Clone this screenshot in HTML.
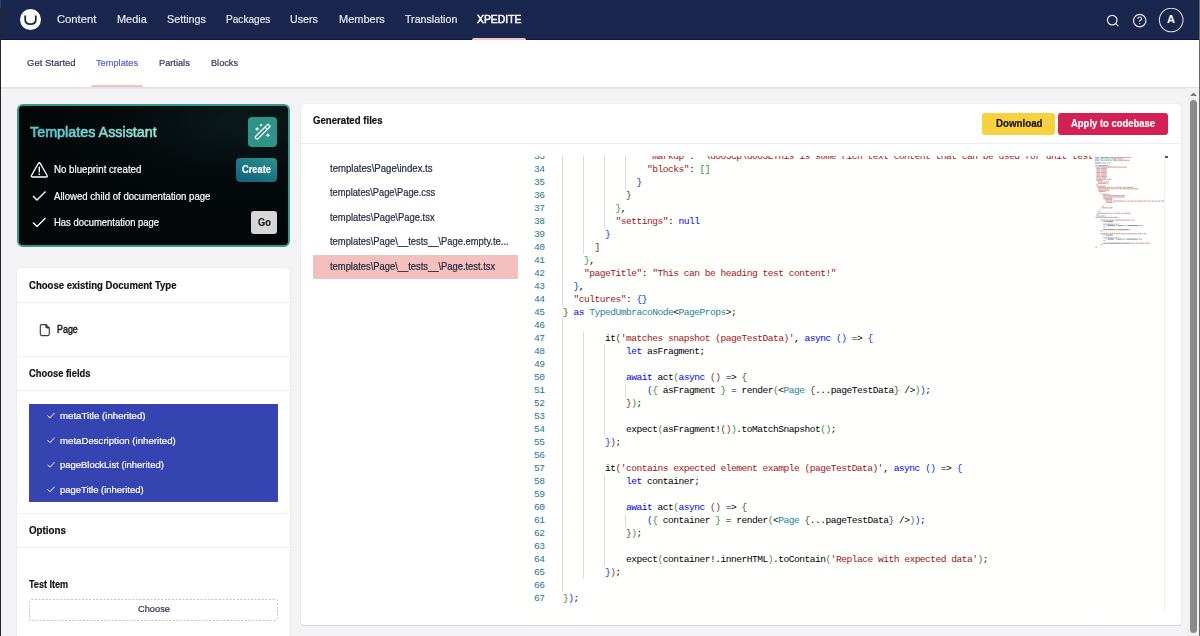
<!DOCTYPE html>
<html><head><meta charset="utf-8">
<style>
*{box-sizing:border-box;margin:0;padding:0}
html,body{width:1200px;height:636px;overflow:hidden;background:#f3f3f5;font-family:"Liberation Sans",sans-serif}
.a{position:absolute}
.t{position:absolute;white-space:pre;transform-origin:0 50%;-webkit-text-stroke:0.2px currentColor}
#hdr{left:0;top:0;width:1200px;height:40px;background:#1b264f}
#sub{left:0;top:40px;width:1200px;height:48px;background:#fff;border-bottom:1px solid #e2e2e6;box-shadow:0 1px 1px rgba(0,0,0,.04)}
#lb{left:0;top:0;width:1px;height:636px;background:#262626}
.ind{height:2px;background:#f5c1bc;border-radius:2px 2px 0 0}
#card{left:17px;top:104px;width:273px;height:143px;border:2px solid #2f9a90;border-radius:6px;background:radial-gradient(ellipse 70% 60% at 82% 12%,#0a1a1c 0%,#050c0e 55%,#030708 100%)}
.btn{position:absolute;border-radius:3px}
.panel{position:absolute;background:#fff;box-shadow:0 0 1px rgba(0,0,0,.22),0 1px 1px rgba(0,0,0,.1)}
.hr{position:absolute;height:1px;background:#ececee}
#ed{left:520px;top:156px;width:572px;height:460px;overflow:hidden;background:#fffffe}
.cl{position:absolute;white-space:pre;font-family:"Liberation Mono",monospace;font-size:9.6px;letter-spacing:-0.51px;line-height:13px;height:13px}
.ln{position:absolute;left:0;width:24.6px;text-align:right;font-family:"Liberation Mono",monospace;font-size:9.6px;letter-spacing:-0.51px;line-height:13px;color:#237893}
.ig{position:absolute;width:1px;background:#d9d9d9}
</style></head><body>
<div id="hdr" class="a"></div>
<div class="a" style="left:0;top:39px;width:1200px;height:1px;background:#0c1640"></div>
<!-- logo -->
<div class="a" style="left:20px;top:9px;width:21px;height:21px;border-radius:50%;background:#fff"></div>
<svg class="a" style="left:20px;top:9px" width="21" height="21" viewBox="0 0 21 21"><path d="M5.2 6.4 V10.8 C5.2 14 7 15.1 10.5 15.1 C14 15.1 15.8 14 15.8 10.8 V6.4" fill="none" stroke="#1b264f" stroke-width="1.8"/></svg>
<div class="a ind" style="left:472px;top:38px;width:54px"></div>
<!-- header icons -->
<svg class="a" style="left:1100px;top:8px" width="90" height="26" viewBox="0 0 90 26">
 <circle cx="12.2" cy="12.1" r="4.8" fill="none" stroke="#e8e8ee" stroke-width="1.2"/>
 <line x1="15.7" y1="15.6" x2="18.3" y2="18.2" stroke="#e8e8ee" stroke-width="1.2"/>
 <circle cx="39.7" cy="12.6" r="6.2" fill="none" stroke="#e8e8ee" stroke-width="1.2"/>
 <path d="M37.8 11 Q37.8 9 39.7 9 Q41.6 9 41.6 10.8 Q41.6 12 39.7 12.8 V13.8" fill="none" stroke="#e8e8ee" stroke-width="1.1"/>
 <circle cx="39.7" cy="15.6" r="0.7" fill="#e8e8ee"/>
 <circle cx="71.2" cy="12" r="11.8" fill="none" stroke="#d8d8e0" stroke-width="1.1"/>
</svg>
<div class="a" style="left:1162px;top:14px;width:18px;text-align:center;font-weight:700;font-size:11px;line-height:11px;color:#fff">A</div>
<!-- sub nav -->
<div id="sub" class="a"></div>
<div class="a ind" style="left:91px;top:85px;width:52px"></div>
<!-- assistant card -->
<div id="card" class="a"></div>
<div class="btn" style="left:248px;top:117px;width:29px;height:30px;background:#2e9488;border-radius:4px"></div>
<svg class="a" style="left:248px;top:117px" width="29" height="30" viewBox="0 0 29 30">
 <g transform="translate(14.6 14.8) rotate(-45)"><rect x="-9.4" y="-1.65" width="18.8" height="3.3" rx="1.4" fill="none" stroke="#fff" stroke-width="1.25"/><line x1="5" y1="-1.6" x2="5" y2="1.6" stroke="#fff" stroke-width="1"/></g>
 <path d="M9.2 9.6 l0.7 1.7 1.7 0.7 -1.7 0.7 -0.7 1.7 -0.7 -1.7 -1.7 -0.7 1.7 -0.7z" fill="#fff"/>
 <path d="M19.9 15.8 l0.7 1.7 1.7 0.7 -1.7 0.7 -0.7 1.7 -0.7 -1.7 -1.7 -0.7 1.7 -0.7z" fill="#fff"/>
 <circle cx="13" cy="8.1" r="1.2" fill="#fff"/>
</svg>
<div class="btn" style="left:236px;top:158px;width:41px;height:24px;background:linear-gradient(20deg,#155f7a 0%,#1d7a86 55%,#2a948e 100%);border-radius:4px"></div>
<div class="btn" style="left:251px;top:211px;width:26px;height:23px;background:#d6d6d6;border-radius:3px"></div>
<!-- warning icon -->
<svg class="a" style="left:30px;top:161px" width="19" height="18" viewBox="0 0 19 18">
 <path d="M8.2 2.6 Q9.3 0.9 10.4 2.6 L17 14.3 Q17.9 16 16 16 H2.6 Q0.7 16 1.6 14.3 Z" fill="none" stroke="#fff" stroke-width="1.3" stroke-linejoin="round"/>
 <line x1="9.3" y1="6.3" x2="9.3" y2="10.8" stroke="#fff" stroke-width="1.4" stroke-linecap="round"/>
 <circle cx="9.3" cy="13.1" r="0.85" fill="#fff"/>
</svg>
<svg class="a" style="left:31px;top:189px" width="18" height="40" viewBox="0 0 18 40">
 <path d="M2 7 L6 11 L14.5 2.5" fill="none" stroke="#fff" stroke-width="1.4"/>
 <path d="M2 33.5 L6 37.5 L14.5 29" fill="none" stroke="#fff" stroke-width="1.4"/>
</svg>
<!-- left white card -->
<div class="panel" style="left:17px;top:268px;width:273px;height:380px;border-radius:3px 3px 0 0"></div>
<div class="hr" style="left:17px;top:302px;width:273px"></div>
<div class="hr" style="left:17px;top:356px;width:273px;background:#f0f0f2"></div>
<div class="a" style="left:16px;top:356px;width:2px;height:2px;background:#f3f3f5"></div>
<div class="hr" style="left:17px;top:390px;width:273px"></div>
<div class="hr" style="left:17px;top:513px;width:273px;background:#f0f0f2"></div>
<div class="a" style="left:16px;top:513px;width:2px;height:2px;background:#f3f3f5"></div>
<div class="hr" style="left:17px;top:547px;width:273px"></div>
<svg class="a" style="left:38px;top:322px" width="14" height="16" viewBox="0 0 14 16">
 <path d="M3.8 2.6 H8.1 L11.3 5.8 V12.1 Q11.3 13.6 9.8 13.6 H3.8 Q2.3 13.6 2.3 12.1 V4.1 Q2.3 2.6 3.8 2.6 Z" fill="none" stroke="#3a3a3a" stroke-width="1.15" stroke-linejoin="round"/>
 <path d="M8.1 2.6 V4.6 Q8.1 5.8 9.3 5.8 H11.3" fill="none" stroke="#3a3a3a" stroke-width="1.6"/>
</svg>
<div class="a" style="left:29px;top:404px;width:249px;height:98px;background:#3544b1"></div>
<svg class="a" style="left:45px;top:408px" width="12" height="90" viewBox="0 0 12 90">
 <path d="M2.5 7.5 L5 10 L9.5 5" fill="none" stroke="#fff" stroke-width="1"/>
 <path d="M2.5 32.1 L5 34.6 L9.5 29.6" fill="none" stroke="#fff" stroke-width="1"/>
 <path d="M2.5 56.7 L5 59.2 L9.5 54.2" fill="none" stroke="#fff" stroke-width="1"/>
 <path d="M2.5 81.3 L5 83.8 L9.5 78.8" fill="none" stroke="#fff" stroke-width="1"/>
</svg>
<svg class="a" style="left:29px;top:599px" width="249" height="22" viewBox="0 0 249 22"><rect x="0.5" y="0.5" width="248" height="21" rx="2" fill="none" stroke="#c4c4c8" stroke-width="1" stroke-dasharray="2 1.6"/></svg>
<!-- right panel -->
<div class="panel" style="left:301px;top:104px;width:880px;height:521px;border-radius:3px"></div>
<div class="hr" style="left:301px;top:143px;width:880px"></div>
<div class="a" style="left:313px;top:255px;width:205px;height:24px;background:#f4c0bd"></div>
<div class="btn" style="left:982px;top:113px;width:73px;height:22px;background:#f9d13f"></div>
<div class="btn" style="left:1058px;top:113px;width:110px;height:22px;background:#d42054"></div>
<!-- editor -->
<div id="ed" class="a">
<div class="ig" style="left:41.50px;top:0px;height:150.0px"></div>
<div class="ig" style="left:62.50px;top:0px;height:98.0px"></div>
<div class="ig" style="left:83.50px;top:0px;height:72.0px"></div>
<div class="ig" style="left:104.50px;top:0px;height:33.0px"></div>
<div class="ig" style="left:41.50px;top:163.0px;height:273.0px"></div>
<div class="ig" style="left:62.50px;top:176.0px;height:247.0px"></div>
<div class="ig" style="left:83.50px;top:189.0px;height:91.0px"></div>
<div class="ig" style="left:104.50px;top:228.0px;height:13.0px"></div>
<div class="ig" style="left:83.50px;top:319.0px;height:91.0px"></div>
<div class="ig" style="left:104.50px;top:358.0px;height:13.0px"></div>
<div class="ln" style="top:-6.0px">33</div>
<div class="ln" style="top:7.0px">34</div>
<div class="ln" style="top:20.0px">35</div>
<div class="ln" style="top:33.0px">36</div>
<div class="ln" style="top:46.0px">37</div>
<div class="ln" style="top:59.0px">38</div>
<div class="ln" style="top:72.0px">39</div>
<div class="ln" style="top:85.0px">40</div>
<div class="ln" style="top:98.0px">41</div>
<div class="ln" style="top:111.0px">42</div>
<div class="ln" style="top:124.0px">43</div>
<div class="ln" style="top:137.0px">44</div>
<div class="ln" style="top:150.0px">45</div>
<div class="ln" style="top:163.0px">46</div>
<div class="ln" style="top:176.0px">47</div>
<div class="ln" style="top:189.0px">48</div>
<div class="ln" style="top:202.0px">49</div>
<div class="ln" style="top:215.0px">50</div>
<div class="ln" style="top:228.0px">51</div>
<div class="ln" style="top:241.0px">52</div>
<div class="ln" style="top:254.0px">53</div>
<div class="ln" style="top:267.0px">54</div>
<div class="ln" style="top:280.0px">55</div>
<div class="ln" style="top:293.0px">56</div>
<div class="ln" style="top:306.0px">57</div>
<div class="ln" style="top:319.0px">58</div>
<div class="ln" style="top:332.0px">59</div>
<div class="ln" style="top:345.0px">60</div>
<div class="ln" style="top:358.0px">61</div>
<div class="ln" style="top:371.0px">62</div>
<div class="ln" style="top:384.0px">63</div>
<div class="ln" style="top:397.0px">64</div>
<div class="ln" style="top:410.0px">65</div>
<div class="ln" style="top:423.0px">66</div>
<div class="ln" style="top:436.0px">67</div>
<div class="cl" style="top:-6.0px;left:127.00px"><span style="color:#a31515">&quot;markup&quot;</span><span style="color:#000000">: </span><span style="color:#a31515">&quot;\u003Cp\u003EThis is some rich text content that can be used for unit test</span></div>
<div class="cl" style="top:7.0px;left:127.00px"><span style="color:#a31515">&quot;blocks&quot;</span><span style="color:#000000">: </span><span style="color:#319331">[]</span></div>
<div class="cl" style="top:20.0px;left:116.50px"><span style="color:#0431fa">}</span></div>
<div class="cl" style="top:33.0px;left:106.00px"><span style="color:#7b3814">}</span></div>
<div class="cl" style="top:46.0px;left:95.50px"><span style="color:#319331">}</span><span style="color:#000000">,</span></div>
<div class="cl" style="top:59.0px;left:95.50px"><span style="color:#a31515">&quot;settings&quot;</span><span style="color:#000000">: </span><span style="color:#0000ff">null</span></div>
<div class="cl" style="top:72.0px;left:85.00px"><span style="color:#0431fa">}</span></div>
<div class="cl" style="top:85.0px;left:74.50px"><span style="color:#7b3814">]</span></div>
<div class="cl" style="top:98.0px;left:64.00px"><span style="color:#319331">}</span><span style="color:#000000">,</span></div>
<div class="cl" style="top:111.0px;left:64.00px"><span style="color:#a31515">&quot;pageTitle&quot;</span><span style="color:#000000">: </span><span style="color:#a31515">&quot;This can be heading test content!&quot;</span></div>
<div class="cl" style="top:124.0px;left:53.50px"><span style="color:#0431fa">}</span><span style="color:#000000">,</span></div>
<div class="cl" style="top:137.0px;left:53.50px"><span style="color:#a31515">&quot;cultures&quot;</span><span style="color:#000000">: </span><span style="color:#0431fa">{}</span></div>
<div class="cl" style="top:150.0px;left:43.00px"><span style="color:#7b3814">}</span><span style="color:#000000"> </span><span style="color:#0000ff">as</span><span style="color:#000000"> </span><span style="color:#267f99">TypedUmbracoNode</span><span style="color:#000000">&lt;</span><span style="color:#267f99">PageProps</span><span style="color:#000000">&gt;;</span></div>
<div class="cl" style="top:163.0px;left:43.00px"></div>
<div class="cl" style="top:176.0px;left:85.00px"><span style="color:#000000">it</span><span style="color:#7b3814">(</span><span style="color:#a31515">&#x27;matches snapshot (pageTestData)&#x27;</span><span style="color:#000000">, </span><span style="color:#0000ff">async</span><span style="color:#000000"> </span><span style="color:#0431fa">()</span><span style="color:#000000"> =&gt; </span><span style="color:#0431fa">{</span></div>
<div class="cl" style="top:189.0px;left:106.00px"><span style="color:#0000ff">let</span><span style="color:#000000"> asFragment;</span></div>
<div class="cl" style="top:202.0px;left:43.00px"></div>
<div class="cl" style="top:215.0px;left:106.00px"><span style="color:#0000ff">await</span><span style="color:#000000"> act</span><span style="color:#319331">(</span><span style="color:#0000ff">async</span><span style="color:#000000"> </span><span style="color:#7b3814">()</span><span style="color:#000000"> =&gt; </span><span style="color:#7b3814">{</span></div>
<div class="cl" style="top:228.0px;left:127.00px"><span style="color:#0431fa">(</span><span style="color:#319331">{</span><span style="color:#000000"> asFragment </span><span style="color:#319331">}</span><span style="color:#000000"> = render</span><span style="color:#319331">(</span><span style="color:#000000">&lt;</span><span style="color:#267f99">Page</span><span style="color:#000000"> </span><span style="color:#7b3814">{</span><span style="color:#000000">...pageTestData</span><span style="color:#7b3814">}</span><span style="color:#000000"> /&gt;</span><span style="color:#319331">)</span><span style="color:#0431fa">)</span><span style="color:#000000">;</span></div>
<div class="cl" style="top:241.0px;left:106.00px"><span style="color:#7b3814">}</span><span style="color:#319331">)</span><span style="color:#000000">;</span></div>
<div class="cl" style="top:254.0px;left:43.00px"></div>
<div class="cl" style="top:267.0px;left:106.00px"><span style="color:#000000">expect</span><span style="color:#319331">(</span><span style="color:#000000">asFragment!</span><span style="color:#7b3814">()</span><span style="color:#319331">)</span><span style="color:#000000">.toMatchSnapshot</span><span style="color:#319331">()</span><span style="color:#000000">;</span></div>
<div class="cl" style="top:280.0px;left:85.00px"><span style="color:#0431fa">}</span><span style="color:#7b3814">)</span><span style="color:#000000">;</span></div>
<div class="cl" style="top:293.0px;left:43.00px"></div>
<div class="cl" style="top:306.0px;left:85.00px"><span style="color:#000000">it</span><span style="color:#7b3814">(</span><span style="color:#a31515">&#x27;contains expected element example (pageTestData)&#x27;</span><span style="color:#000000">, </span><span style="color:#0000ff">async</span><span style="color:#000000"> </span><span style="color:#0431fa">()</span><span style="color:#000000"> =&gt; </span><span style="color:#0431fa">{</span></div>
<div class="cl" style="top:319.0px;left:106.00px"><span style="color:#0000ff">let</span><span style="color:#000000"> container;</span></div>
<div class="cl" style="top:332.0px;left:43.00px"></div>
<div class="cl" style="top:345.0px;left:106.00px"><span style="color:#0000ff">await</span><span style="color:#000000"> act</span><span style="color:#319331">(</span><span style="color:#0000ff">async</span><span style="color:#000000"> </span><span style="color:#7b3814">()</span><span style="color:#000000"> =&gt; </span><span style="color:#7b3814">{</span></div>
<div class="cl" style="top:358.0px;left:127.00px"><span style="color:#0431fa">(</span><span style="color:#319331">{</span><span style="color:#000000"> container </span><span style="color:#319331">}</span><span style="color:#000000"> = render</span><span style="color:#319331">(</span><span style="color:#000000">&lt;</span><span style="color:#267f99">Page</span><span style="color:#000000"> </span><span style="color:#7b3814">{</span><span style="color:#000000">...pageTestData</span><span style="color:#7b3814">}</span><span style="color:#000000"> /&gt;</span><span style="color:#319331">)</span><span style="color:#0431fa">)</span><span style="color:#000000">;</span></div>
<div class="cl" style="top:371.0px;left:106.00px"><span style="color:#7b3814">}</span><span style="color:#319331">)</span><span style="color:#000000">;</span></div>
<div class="cl" style="top:384.0px;left:43.00px"></div>
<div class="cl" style="top:397.0px;left:106.00px"><span style="color:#000000">expect</span><span style="color:#319331">(</span><span style="color:#000000">container!.innerHTML</span><span style="color:#319331">)</span><span style="color:#000000">.toContain</span><span style="color:#319331">(</span><span style="color:#a31515">&#x27;Replace with expected data&#x27;</span><span style="color:#319331">)</span><span style="color:#000000">;</span></div>
<div class="cl" style="top:410.0px;left:85.00px"><span style="color:#0431fa">}</span><span style="color:#7b3814">)</span><span style="color:#000000">;</span></div>
<div class="cl" style="top:423.0px;left:43.00px"></div>
<div class="cl" style="top:436.0px;left:43.00px"><span style="color:#319331">}</span><span style="color:#0431fa">)</span><span style="color:#000000">;</span></div>
</div>
<div class="a" style="left:1095px;top:156px;width:69px;height:460px;background:#fffffe"></div>
<svg class="a" style="left:0;top:0" width="1200" height="636" viewBox="0 0 1200 636" opacity="0.6"><rect x="1095.00" y="157.00" width="4.08" height="1.1" fill="#6a6aff"/><rect x="1099.76" y="157.00" width="0.68" height="1.1" fill="#555"/><rect x="1101.12" y="157.00" width="2.72" height="1.1" fill="#555"/><rect x="1104.52" y="157.00" width="4.08" height="1.1" fill="#555"/><rect x="1109.28" y="157.00" width="0.68" height="1.1" fill="#555"/><rect x="1110.64" y="157.00" width="2.72" height="1.1" fill="#555"/><rect x="1114.04" y="157.00" width="16.32" height="1.1" fill="#c46a6a"/><rect x="1130.36" y="157.00" width="0.68" height="1.1" fill="#555"/><rect x="1095.00" y="158.36" width="4.08" height="1.1" fill="#6a6aff"/><rect x="1099.76" y="158.36" width="2.72" height="1.1" fill="#5aa8b8"/><rect x="1102.48" y="158.36" width="0.68" height="1.1" fill="#555"/><rect x="1103.84" y="158.36" width="0.68" height="1.1" fill="#555"/><rect x="1105.20" y="158.36" width="6.12" height="1.1" fill="#5aa8b8"/><rect x="1112.00" y="158.36" width="0.68" height="1.1" fill="#555"/><rect x="1113.36" y="158.36" width="2.72" height="1.1" fill="#555"/><rect x="1116.76" y="158.36" width="5.44" height="1.1" fill="#c46a6a"/><rect x="1122.20" y="158.36" width="0.68" height="1.1" fill="#555"/><rect x="1095.00" y="159.72" width="4.08" height="1.1" fill="#6a6aff"/><rect x="1099.76" y="159.72" width="0.68" height="1.1" fill="#555"/><rect x="1101.12" y="159.72" width="10.88" height="1.1" fill="#5aa8b8"/><rect x="1112.68" y="159.72" width="0.68" height="1.1" fill="#555"/><rect x="1114.04" y="159.72" width="2.72" height="1.1" fill="#555"/><rect x="1117.44" y="159.72" width="11.56" height="1.1" fill="#c46a6a"/><rect x="1129.00" y="159.72" width="0.68" height="1.1" fill="#555"/><rect x="1095.00" y="162.44" width="5.44" height="1.1" fill="#555"/><rect x="1100.44" y="162.44" width="0.68" height="1.1" fill="#6a80fa"/><rect x="1101.12" y="162.44" width="4.08" height="1.1" fill="#c46a6a"/><rect x="1105.20" y="162.44" width="0.68" height="1.1" fill="#555"/><rect x="1106.56" y="162.44" width="1.36" height="1.1" fill="#70b070"/><rect x="1108.60" y="162.44" width="1.36" height="1.1" fill="#555"/><rect x="1110.64" y="162.44" width="0.68" height="1.1" fill="#70b070"/><rect x="1095.00" y="165.16" width="3.40" height="1.1" fill="#6a6aff"/><rect x="1099.08" y="165.16" width="8.16" height="1.1" fill="#555"/><rect x="1107.92" y="165.16" width="0.68" height="1.1" fill="#555"/><rect x="1109.28" y="165.16" width="0.68" height="1.1" fill="#a07050"/><rect x="1096.36" y="166.52" width="2.72" height="1.1" fill="#c46a6a"/><rect x="1099.08" y="166.52" width="0.68" height="1.1" fill="#555"/><rect x="1100.44" y="166.52" width="25.84" height="1.1" fill="#c46a6a"/><rect x="1126.28" y="166.52" width="0.68" height="1.1" fill="#555"/><rect x="1096.36" y="167.88" width="3.40" height="1.1" fill="#c46a6a"/><rect x="1099.76" y="167.88" width="0.68" height="1.1" fill="#555"/><rect x="1101.12" y="167.88" width="4.76" height="1.1" fill="#c46a6a"/><rect x="1105.88" y="167.88" width="0.68" height="1.1" fill="#555"/><rect x="1096.36" y="169.24" width="3.40" height="1.1" fill="#c46a6a"/><rect x="1099.76" y="169.24" width="0.68" height="1.1" fill="#555"/><rect x="1101.12" y="169.24" width="4.76" height="1.1" fill="#c46a6a"/><rect x="1105.88" y="169.24" width="0.68" height="1.1" fill="#555"/><rect x="1096.36" y="170.60" width="3.40" height="1.1" fill="#c46a6a"/><rect x="1099.76" y="170.60" width="0.68" height="1.1" fill="#555"/><rect x="1101.12" y="170.60" width="4.76" height="1.1" fill="#c46a6a"/><rect x="1105.88" y="170.60" width="0.68" height="1.1" fill="#555"/><rect x="1096.36" y="171.96" width="3.40" height="1.1" fill="#c46a6a"/><rect x="1099.76" y="171.96" width="0.68" height="1.1" fill="#555"/><rect x="1101.12" y="171.96" width="4.76" height="1.1" fill="#c46a6a"/><rect x="1105.88" y="171.96" width="0.68" height="1.1" fill="#555"/><rect x="1096.36" y="173.32" width="3.40" height="1.1" fill="#c46a6a"/><rect x="1099.76" y="173.32" width="0.68" height="1.1" fill="#555"/><rect x="1101.12" y="173.32" width="4.76" height="1.1" fill="#c46a6a"/><rect x="1105.88" y="173.32" width="0.68" height="1.1" fill="#555"/><rect x="1096.36" y="174.68" width="3.40" height="1.1" fill="#c46a6a"/><rect x="1099.76" y="174.68" width="0.68" height="1.1" fill="#555"/><rect x="1101.12" y="174.68" width="4.76" height="1.1" fill="#c46a6a"/><rect x="1105.88" y="174.68" width="0.68" height="1.1" fill="#555"/><rect x="1096.36" y="176.04" width="3.40" height="1.1" fill="#c46a6a"/><rect x="1099.76" y="176.04" width="0.68" height="1.1" fill="#555"/><rect x="1101.12" y="176.04" width="4.76" height="1.1" fill="#c46a6a"/><rect x="1105.88" y="176.04" width="0.68" height="1.1" fill="#555"/><rect x="1096.36" y="177.40" width="4.08" height="1.1" fill="#c46a6a"/><rect x="1100.44" y="177.40" width="0.68" height="1.1" fill="#555"/><rect x="1101.80" y="177.40" width="4.08" height="1.1" fill="#c46a6a"/><rect x="1105.88" y="177.40" width="0.68" height="1.1" fill="#555"/><rect x="1096.36" y="178.76" width="8.84" height="1.1" fill="#c46a6a"/><rect x="1105.20" y="178.76" width="0.68" height="1.1" fill="#555"/><rect x="1106.56" y="178.76" width="4.08" height="1.1" fill="#c46a6a"/><rect x="1110.64" y="178.76" width="0.68" height="1.1" fill="#555"/><rect x="1096.36" y="180.12" width="4.76" height="1.1" fill="#c46a6a"/><rect x="1101.12" y="180.12" width="0.68" height="1.1" fill="#555"/><rect x="1102.48" y="180.12" width="0.68" height="1.1" fill="#6a80fa"/><rect x="1097.72" y="181.48" width="4.08" height="1.1" fill="#c46a6a"/><rect x="1101.80" y="181.48" width="0.68" height="1.1" fill="#555"/><rect x="1103.16" y="181.48" width="5.44" height="1.1" fill="#c46a6a"/><rect x="1108.60" y="181.48" width="0.68" height="1.1" fill="#555"/><rect x="1097.72" y="182.84" width="7.48" height="1.1" fill="#c46a6a"/><rect x="1105.20" y="182.84" width="0.68" height="1.1" fill="#555"/><rect x="1106.56" y="182.84" width="1.36" height="1.1" fill="#70b070"/><rect x="1096.36" y="184.20" width="1.36" height="1.1" fill="#6a80fa"/><rect x="1096.36" y="185.56" width="8.16" height="1.1" fill="#c46a6a"/><rect x="1104.52" y="185.56" width="0.68" height="1.1" fill="#555"/><rect x="1105.88" y="185.56" width="0.68" height="1.1" fill="#6a80fa"/><rect x="1097.72" y="186.92" width="7.48" height="1.1" fill="#c46a6a"/><rect x="1105.20" y="186.92" width="0.68" height="1.1" fill="#555"/><rect x="1106.56" y="186.92" width="3.40" height="1.1" fill="#c46a6a"/><rect x="1110.64" y="186.92" width="2.04" height="1.1" fill="#c46a6a"/><rect x="1113.36" y="186.92" width="1.36" height="1.1" fill="#c46a6a"/><rect x="1115.40" y="186.92" width="2.72" height="1.1" fill="#c46a6a"/><rect x="1118.80" y="186.92" width="3.40" height="1.1" fill="#c46a6a"/><rect x="1122.88" y="186.92" width="2.72" height="1.1" fill="#c46a6a"/><rect x="1126.28" y="186.92" width="6.12" height="1.1" fill="#c46a6a"/><rect x="1132.40" y="186.92" width="0.68" height="1.1" fill="#555"/><rect x="1097.72" y="188.28" width="11.56" height="1.1" fill="#c46a6a"/><rect x="1109.28" y="188.28" width="0.68" height="1.1" fill="#555"/><rect x="1110.64" y="188.28" width="3.40" height="1.1" fill="#c46a6a"/><rect x="1114.72" y="188.28" width="2.04" height="1.1" fill="#c46a6a"/><rect x="1117.44" y="188.28" width="1.36" height="1.1" fill="#c46a6a"/><rect x="1119.48" y="188.28" width="2.72" height="1.1" fill="#c46a6a"/><rect x="1122.88" y="188.28" width="7.48" height="1.1" fill="#c46a6a"/><rect x="1131.04" y="188.28" width="6.12" height="1.1" fill="#c46a6a"/><rect x="1137.16" y="188.28" width="0.68" height="1.1" fill="#555"/><rect x="1097.72" y="189.64" width="10.20" height="1.1" fill="#c46a6a"/><rect x="1107.92" y="189.64" width="0.68" height="1.1" fill="#555"/><rect x="1109.28" y="189.64" width="0.68" height="1.1" fill="#70b070"/><rect x="1099.08" y="191.00" width="4.76" height="1.1" fill="#c46a6a"/><rect x="1103.84" y="191.00" width="0.68" height="1.1" fill="#555"/><rect x="1105.20" y="191.00" width="0.68" height="1.1" fill="#a07050"/><rect x="1100.44" y="192.36" width="0.68" height="1.1" fill="#6a80fa"/><rect x="1101.80" y="193.72" width="6.12" height="1.1" fill="#c46a6a"/><rect x="1107.92" y="193.72" width="0.68" height="1.1" fill="#555"/><rect x="1109.28" y="193.72" width="0.68" height="1.1" fill="#70b070"/><rect x="1103.16" y="195.08" width="2.72" height="1.1" fill="#c46a6a"/><rect x="1105.88" y="195.08" width="0.68" height="1.1" fill="#555"/><rect x="1107.24" y="195.08" width="17.00" height="1.1" fill="#c46a6a"/><rect x="1124.24" y="195.08" width="0.68" height="1.1" fill="#555"/><rect x="1103.16" y="196.44" width="8.84" height="1.1" fill="#c46a6a"/><rect x="1112.00" y="196.44" width="0.68" height="1.1" fill="#555"/><rect x="1113.36" y="196.44" width="10.20" height="1.1" fill="#c46a6a"/><rect x="1123.56" y="196.44" width="0.68" height="1.1" fill="#555"/><rect x="1103.16" y="197.80" width="8.16" height="1.1" fill="#c46a6a"/><rect x="1111.32" y="197.80" width="0.68" height="1.1" fill="#555"/><rect x="1112.68" y="197.80" width="0.68" height="1.1" fill="#a07050"/><rect x="1104.52" y="199.16" width="6.80" height="1.1" fill="#c46a6a"/><rect x="1111.32" y="199.16" width="0.68" height="1.1" fill="#555"/><rect x="1112.68" y="199.16" width="0.68" height="1.1" fill="#6a80fa"/><rect x="1105.88" y="200.52" width="5.44" height="1.1" fill="#c46a6a"/><rect x="1111.32" y="200.52" width="0.68" height="1.1" fill="#555"/><rect x="1112.68" y="200.52" width="12.24" height="1.1" fill="#c46a6a"/><rect x="1125.60" y="200.52" width="1.36" height="1.1" fill="#c46a6a"/><rect x="1127.64" y="200.52" width="2.72" height="1.1" fill="#c46a6a"/><rect x="1131.04" y="200.52" width="2.72" height="1.1" fill="#c46a6a"/><rect x="1134.44" y="200.52" width="2.72" height="1.1" fill="#c46a6a"/><rect x="1137.84" y="200.52" width="4.76" height="1.1" fill="#c46a6a"/><rect x="1143.28" y="200.52" width="2.72" height="1.1" fill="#c46a6a"/><rect x="1146.68" y="200.52" width="2.04" height="1.1" fill="#c46a6a"/><rect x="1149.40" y="200.52" width="1.36" height="1.1" fill="#c46a6a"/><rect x="1151.44" y="200.52" width="2.72" height="1.1" fill="#c46a6a"/><rect x="1154.84" y="200.52" width="2.04" height="1.1" fill="#c46a6a"/><rect x="1157.56" y="200.52" width="2.72" height="1.1" fill="#c46a6a"/><rect x="1160.96" y="200.52" width="3.04" height="1.1" fill="#c46a6a"/><rect x="1105.88" y="201.88" width="5.44" height="1.1" fill="#c46a6a"/><rect x="1111.32" y="201.88" width="0.68" height="1.1" fill="#555"/><rect x="1112.68" y="201.88" width="1.36" height="1.1" fill="#70b070"/><rect x="1104.52" y="203.24" width="0.68" height="1.1" fill="#6a80fa"/><rect x="1103.16" y="204.60" width="0.68" height="1.1" fill="#a07050"/><rect x="1101.80" y="205.96" width="0.68" height="1.1" fill="#70b070"/><rect x="1102.48" y="205.96" width="0.68" height="1.1" fill="#555"/><rect x="1101.80" y="207.32" width="6.80" height="1.1" fill="#c46a6a"/><rect x="1108.60" y="207.32" width="0.68" height="1.1" fill="#555"/><rect x="1109.96" y="207.32" width="2.72" height="1.1" fill="#6a6aff"/><rect x="1100.44" y="208.68" width="0.68" height="1.1" fill="#6a80fa"/><rect x="1099.08" y="210.04" width="0.68" height="1.1" fill="#a07050"/><rect x="1097.72" y="211.40" width="0.68" height="1.1" fill="#70b070"/><rect x="1098.40" y="211.40" width="0.68" height="1.1" fill="#555"/><rect x="1097.72" y="212.76" width="7.48" height="1.1" fill="#c46a6a"/><rect x="1105.20" y="212.76" width="0.68" height="1.1" fill="#555"/><rect x="1106.56" y="212.76" width="3.40" height="1.1" fill="#c46a6a"/><rect x="1110.64" y="212.76" width="2.04" height="1.1" fill="#c46a6a"/><rect x="1113.36" y="212.76" width="1.36" height="1.1" fill="#c46a6a"/><rect x="1115.40" y="212.76" width="4.76" height="1.1" fill="#c46a6a"/><rect x="1120.84" y="212.76" width="2.72" height="1.1" fill="#c46a6a"/><rect x="1124.24" y="212.76" width="6.12" height="1.1" fill="#c46a6a"/><rect x="1096.36" y="214.12" width="0.68" height="1.1" fill="#6a80fa"/><rect x="1097.04" y="214.12" width="0.68" height="1.1" fill="#555"/><rect x="1096.36" y="215.48" width="6.80" height="1.1" fill="#c46a6a"/><rect x="1103.16" y="215.48" width="0.68" height="1.1" fill="#555"/><rect x="1104.52" y="215.48" width="1.36" height="1.1" fill="#6a80fa"/><rect x="1095.00" y="216.84" width="0.68" height="1.1" fill="#a07050"/><rect x="1096.36" y="216.84" width="1.36" height="1.1" fill="#6a6aff"/><rect x="1098.40" y="216.84" width="10.88" height="1.1" fill="#5aa8b8"/><rect x="1109.28" y="216.84" width="0.68" height="1.1" fill="#555"/><rect x="1109.96" y="216.84" width="6.12" height="1.1" fill="#5aa8b8"/><rect x="1116.08" y="216.84" width="1.36" height="1.1" fill="#555"/><rect x="1100.44" y="219.56" width="1.36" height="1.1" fill="#555"/><rect x="1101.80" y="219.56" width="0.68" height="1.1" fill="#a07050"/><rect x="1102.48" y="219.56" width="5.44" height="1.1" fill="#c46a6a"/><rect x="1108.60" y="219.56" width="5.44" height="1.1" fill="#c46a6a"/><rect x="1114.72" y="219.56" width="10.20" height="1.1" fill="#c46a6a"/><rect x="1124.92" y="219.56" width="0.68" height="1.1" fill="#555"/><rect x="1126.28" y="219.56" width="3.40" height="1.1" fill="#6a6aff"/><rect x="1130.36" y="219.56" width="1.36" height="1.1" fill="#6a80fa"/><rect x="1132.40" y="219.56" width="1.36" height="1.1" fill="#555"/><rect x="1134.44" y="219.56" width="0.68" height="1.1" fill="#6a80fa"/><rect x="1103.16" y="220.92" width="2.04" height="1.1" fill="#6a6aff"/><rect x="1105.88" y="220.92" width="7.48" height="1.1" fill="#555"/><rect x="1103.16" y="223.64" width="3.40" height="1.1" fill="#6a6aff"/><rect x="1107.24" y="223.64" width="2.04" height="1.1" fill="#555"/><rect x="1109.28" y="223.64" width="0.68" height="1.1" fill="#70b070"/><rect x="1109.96" y="223.64" width="3.40" height="1.1" fill="#6a6aff"/><rect x="1114.04" y="223.64" width="1.36" height="1.1" fill="#a07050"/><rect x="1116.08" y="223.64" width="1.36" height="1.1" fill="#555"/><rect x="1118.12" y="223.64" width="0.68" height="1.1" fill="#a07050"/><rect x="1105.88" y="225.00" width="0.68" height="1.1" fill="#6a80fa"/><rect x="1106.56" y="225.00" width="0.68" height="1.1" fill="#70b070"/><rect x="1107.92" y="225.00" width="6.80" height="1.1" fill="#555"/><rect x="1115.40" y="225.00" width="0.68" height="1.1" fill="#70b070"/><rect x="1116.76" y="225.00" width="0.68" height="1.1" fill="#555"/><rect x="1118.12" y="225.00" width="4.08" height="1.1" fill="#555"/><rect x="1122.20" y="225.00" width="0.68" height="1.1" fill="#70b070"/><rect x="1122.88" y="225.00" width="0.68" height="1.1" fill="#555"/><rect x="1123.56" y="225.00" width="2.72" height="1.1" fill="#5aa8b8"/><rect x="1126.96" y="225.00" width="0.68" height="1.1" fill="#a07050"/><rect x="1127.64" y="225.00" width="10.20" height="1.1" fill="#555"/><rect x="1137.84" y="225.00" width="0.68" height="1.1" fill="#a07050"/><rect x="1139.20" y="225.00" width="1.36" height="1.1" fill="#555"/><rect x="1140.56" y="225.00" width="0.68" height="1.1" fill="#70b070"/><rect x="1141.24" y="225.00" width="0.68" height="1.1" fill="#6a80fa"/><rect x="1141.92" y="225.00" width="0.68" height="1.1" fill="#555"/><rect x="1103.16" y="226.36" width="0.68" height="1.1" fill="#a07050"/><rect x="1103.84" y="226.36" width="0.68" height="1.1" fill="#70b070"/><rect x="1104.52" y="226.36" width="0.68" height="1.1" fill="#555"/><rect x="1103.16" y="229.08" width="4.08" height="1.1" fill="#555"/><rect x="1107.24" y="229.08" width="0.68" height="1.1" fill="#70b070"/><rect x="1107.92" y="229.08" width="7.48" height="1.1" fill="#555"/><rect x="1115.40" y="229.08" width="1.36" height="1.1" fill="#a07050"/><rect x="1116.76" y="229.08" width="0.68" height="1.1" fill="#70b070"/><rect x="1117.44" y="229.08" width="10.88" height="1.1" fill="#555"/><rect x="1128.32" y="229.08" width="1.36" height="1.1" fill="#70b070"/><rect x="1129.68" y="229.08" width="0.68" height="1.1" fill="#555"/><rect x="1100.44" y="230.44" width="0.68" height="1.1" fill="#6a80fa"/><rect x="1101.12" y="230.44" width="0.68" height="1.1" fill="#a07050"/><rect x="1101.80" y="230.44" width="0.68" height="1.1" fill="#555"/><rect x="1100.44" y="233.16" width="1.36" height="1.1" fill="#555"/><rect x="1101.80" y="233.16" width="0.68" height="1.1" fill="#a07050"/><rect x="1102.48" y="233.16" width="6.12" height="1.1" fill="#c46a6a"/><rect x="1109.28" y="233.16" width="5.44" height="1.1" fill="#c46a6a"/><rect x="1115.40" y="233.16" width="4.76" height="1.1" fill="#c46a6a"/><rect x="1120.84" y="233.16" width="4.76" height="1.1" fill="#c46a6a"/><rect x="1126.28" y="233.16" width="10.20" height="1.1" fill="#c46a6a"/><rect x="1136.48" y="233.16" width="0.68" height="1.1" fill="#555"/><rect x="1137.84" y="233.16" width="3.40" height="1.1" fill="#6a6aff"/><rect x="1141.92" y="233.16" width="1.36" height="1.1" fill="#6a80fa"/><rect x="1143.96" y="233.16" width="1.36" height="1.1" fill="#555"/><rect x="1146.00" y="233.16" width="0.68" height="1.1" fill="#6a80fa"/><rect x="1103.16" y="234.52" width="2.04" height="1.1" fill="#6a6aff"/><rect x="1105.88" y="234.52" width="6.80" height="1.1" fill="#555"/><rect x="1103.16" y="237.24" width="3.40" height="1.1" fill="#6a6aff"/><rect x="1107.24" y="237.24" width="2.04" height="1.1" fill="#555"/><rect x="1109.28" y="237.24" width="0.68" height="1.1" fill="#70b070"/><rect x="1109.96" y="237.24" width="3.40" height="1.1" fill="#6a6aff"/><rect x="1114.04" y="237.24" width="1.36" height="1.1" fill="#a07050"/><rect x="1116.08" y="237.24" width="1.36" height="1.1" fill="#555"/><rect x="1118.12" y="237.24" width="0.68" height="1.1" fill="#a07050"/><rect x="1105.88" y="238.60" width="0.68" height="1.1" fill="#6a80fa"/><rect x="1106.56" y="238.60" width="0.68" height="1.1" fill="#70b070"/><rect x="1107.92" y="238.60" width="6.12" height="1.1" fill="#555"/><rect x="1114.72" y="238.60" width="0.68" height="1.1" fill="#70b070"/><rect x="1116.08" y="238.60" width="0.68" height="1.1" fill="#555"/><rect x="1117.44" y="238.60" width="4.08" height="1.1" fill="#555"/><rect x="1121.52" y="238.60" width="0.68" height="1.1" fill="#70b070"/><rect x="1122.20" y="238.60" width="0.68" height="1.1" fill="#555"/><rect x="1122.88" y="238.60" width="2.72" height="1.1" fill="#5aa8b8"/><rect x="1126.28" y="238.60" width="0.68" height="1.1" fill="#a07050"/><rect x="1126.96" y="238.60" width="10.20" height="1.1" fill="#555"/><rect x="1137.16" y="238.60" width="0.68" height="1.1" fill="#a07050"/><rect x="1138.52" y="238.60" width="1.36" height="1.1" fill="#555"/><rect x="1139.88" y="238.60" width="0.68" height="1.1" fill="#70b070"/><rect x="1140.56" y="238.60" width="0.68" height="1.1" fill="#6a80fa"/><rect x="1141.24" y="238.60" width="0.68" height="1.1" fill="#555"/><rect x="1103.16" y="239.96" width="0.68" height="1.1" fill="#a07050"/><rect x="1103.84" y="239.96" width="0.68" height="1.1" fill="#70b070"/><rect x="1104.52" y="239.96" width="0.68" height="1.1" fill="#555"/><rect x="1103.16" y="242.68" width="4.08" height="1.1" fill="#555"/><rect x="1107.24" y="242.68" width="0.68" height="1.1" fill="#70b070"/><rect x="1107.92" y="242.68" width="13.60" height="1.1" fill="#555"/><rect x="1121.52" y="242.68" width="0.68" height="1.1" fill="#70b070"/><rect x="1122.20" y="242.68" width="6.80" height="1.1" fill="#555"/><rect x="1129.00" y="242.68" width="0.68" height="1.1" fill="#70b070"/><rect x="1129.68" y="242.68" width="5.44" height="1.1" fill="#c46a6a"/><rect x="1135.80" y="242.68" width="2.72" height="1.1" fill="#c46a6a"/><rect x="1139.20" y="242.68" width="5.44" height="1.1" fill="#c46a6a"/><rect x="1145.32" y="242.68" width="3.40" height="1.1" fill="#c46a6a"/><rect x="1148.72" y="242.68" width="0.68" height="1.1" fill="#70b070"/><rect x="1149.40" y="242.68" width="0.68" height="1.1" fill="#555"/><rect x="1100.44" y="244.04" width="0.68" height="1.1" fill="#6a80fa"/><rect x="1101.12" y="244.04" width="0.68" height="1.1" fill="#a07050"/><rect x="1101.80" y="244.04" width="0.68" height="1.1" fill="#555"/><rect x="1095.00" y="246.76" width="0.68" height="1.1" fill="#70b070"/><rect x="1095.68" y="246.76" width="0.68" height="1.1" fill="#6a80fa"/><rect x="1096.36" y="246.76" width="0.68" height="1.1" fill="#555"/></svg>
<div class="a" style="left:1164px;top:156px;width:1px;height:457px;background:#f0f0f0"></div>
<div class="a" style="left:1165px;top:156px;width:3px;height:2px;background:#555"></div>
<!-- page scrollbar -->
<div class="a" style="left:1188px;top:88px;width:11px;height:548px;background:#f1f1f1"></div>
<svg class="a" style="left:1188px;top:90px" width="11" height="8" viewBox="0 0 11 8"><path d="M2 6 L5.5 2.5 L9 6 Z" fill="#7a7a7a"/></svg>
<div class="a" style="left:1190px;top:100px;width:7px;height:533px;background:#8a8a8a;border-radius:4px"></div>
<div class="a" style="left:1198.5px;top:0;width:1.5px;height:636px;background:#6a6a6a"></div>
<div class="t" id="tx0" style="left:57.25px;top:13.20px;font-size:11.77px;line-height:11.77px;font-weight:400;color:#e6e8f0;transform:scaleX(0.9536);">Content</div>
<div class="t" id="tx1" style="left:117.25px;top:13.20px;font-size:11.77px;line-height:11.77px;font-weight:400;color:#e6e8f0;transform:scaleX(0.9270);">Media</div>
<div class="t" id="tx2" style="left:167.05px;top:13.20px;font-size:11.77px;line-height:11.77px;font-weight:400;color:#e6e8f0;transform:scaleX(0.9151);">Settings</div>
<div class="t" id="tx3" style="left:226.05px;top:13.20px;font-size:11.77px;line-height:11.77px;font-weight:400;color:#e6e8f0;transform:scaleX(0.8575);">Packages</div>
<div class="t" id="tx4" style="left:290.45px;top:13.20px;font-size:11.77px;line-height:11.77px;font-weight:400;color:#e6e8f0;transform:scaleX(0.9047);">Users</div>
<div class="t" id="tx5" style="left:338.55px;top:13.20px;font-size:11.77px;line-height:11.77px;font-weight:400;color:#e6e8f0;transform:scaleX(0.9339);">Members</div>
<div class="t" id="tx6" style="left:404.65px;top:13.20px;font-size:11.77px;line-height:11.77px;font-weight:400;color:#e6e8f0;transform:scaleX(0.9055);">Translation</div>
<div class="t" id="tx7" style="left:476.85px;top:13.20px;font-size:11.77px;line-height:11.77px;font-weight:400;color:#ffffff;transform:scaleX(0.8840);-webkit-text-stroke:0.55px #ffffff;">XPEDITE</div>
<div class="t" id="tx8" style="left:27.20px;top:58.01px;font-size:9.88px;line-height:9.88px;font-weight:400;color:#2c3560;transform:scaleX(0.9622);">Get Started</div>
<div class="t" id="tx9" style="left:96.20px;top:58.01px;font-size:9.88px;line-height:9.88px;font-weight:400;color:#5660c8;transform:scaleX(0.9351);">Templates</div>
<div class="t" id="tx10" style="left:159.20px;top:58.01px;font-size:9.88px;line-height:9.88px;font-weight:400;color:#2c3560;transform:scaleX(0.9349);">Partials</div>
<div class="t" id="tx11" style="left:210.50px;top:58.01px;font-size:9.88px;line-height:9.88px;font-weight:400;color:#2c3560;transform:scaleX(0.9278);">Blocks</div>
<div class="t" id="tx12" style="left:29.67px;top:124.51px;font-size:14.39px;line-height:14.39px;font-weight:400;color:#5fd0c4;transform:scaleX(0.9978);background:linear-gradient(90deg,#48bfd6,#a6ead2);-webkit-background-clip:text;background-clip:text;color:transparent;-webkit-text-stroke:0.55px rgba(120,220,210,0.35);">Templates Assistant</div>
<div class="t" id="tx13" style="left:53.70px;top:165.01px;font-size:10.03px;line-height:10.03px;font-weight:400;color:#ffffff;transform:scaleX(0.9689);">No blueprint created</div>
<div class="t" id="tx14" style="left:53.90px;top:192.01px;font-size:10.03px;line-height:10.03px;font-weight:400;color:#ffffff;transform:scaleX(0.9587);">Allowed child of documentation page</div>
<div class="t" id="tx15" style="left:53.90px;top:217.81px;font-size:10.03px;line-height:10.03px;font-weight:400;color:#ffffff;transform:scaleX(0.9437);">Has documentation page</div>
<div class="t" id="tx16" style="left:241.69px;top:165.21px;font-size:10.47px;line-height:10.47px;font-weight:700;color:#ffffff;transform:scaleX(0.8875);">Create</div>
<div class="t" id="tx17" style="left:258.19px;top:217.80px;font-size:10.47px;line-height:10.47px;font-weight:700;color:#1a1a1a;transform:scaleX(0.8819);">Go</div>
<div class="t" id="tx18" style="left:29.09px;top:280.60px;font-size:10.47px;line-height:10.47px;font-weight:700;color:#111111;transform:scaleX(0.9134);">Choose existing Document Type</div>
<div class="t" id="tx19" style="left:57.29px;top:325.01px;font-size:10.47px;line-height:10.47px;font-weight:400;color:#111111;transform:scaleX(0.8518);-webkit-text-stroke:0.45px #1b1b1b;">Page</div>
<div class="t" id="tx20" style="left:29.09px;top:369.10px;font-size:10.47px;line-height:10.47px;font-weight:700;color:#111111;transform:scaleX(0.8949);">Choose fields</div>
<div class="t" id="tx21" style="left:60.41px;top:410.92px;font-size:9.59px;line-height:9.59px;font-weight:400;color:#ffffff;transform:scaleX(1.0088);">metaTitle (inherited)</div>
<div class="t" id="tx22" style="left:60.41px;top:435.51px;font-size:9.59px;line-height:9.59px;font-weight:400;color:#ffffff;transform:scaleX(1.0067);">metaDescription (inherited)</div>
<div class="t" id="tx23" style="left:60.41px;top:460.11px;font-size:9.59px;line-height:9.59px;font-weight:400;color:#ffffff;transform:scaleX(0.9853);">pageBlockList (inherited)</div>
<div class="t" id="tx24" style="left:60.41px;top:484.70px;font-size:9.59px;line-height:9.59px;font-weight:400;color:#ffffff;transform:scaleX(0.9852);">pageTitle (inherited)</div>
<div class="t" id="tx25" style="left:29.39px;top:525.80px;font-size:10.47px;line-height:10.47px;font-weight:700;color:#111111;transform:scaleX(0.9338);">Options</div>
<div class="t" id="tx26" style="left:29.40px;top:579.71px;font-size:10.03px;line-height:10.03px;font-weight:700;color:#111111;transform:scaleX(0.9044);">Test Item</div>
<div class="t" id="tx27" style="left:137.61px;top:604.31px;font-size:9.59px;line-height:9.59px;font-weight:400;color:#2a2f48;transform:scaleX(0.9685);">Choose</div>
<div class="t" id="tx28" style="left:313.39px;top:115.71px;font-size:10.47px;line-height:10.47px;font-weight:700;color:#111111;transform:scaleX(0.9192);">Generated files</div>
<div class="t" id="tx29" style="left:329.70px;top:163.51px;font-size:10.03px;line-height:10.03px;font-weight:400;color:#1f2440;transform:scaleX(0.9597);">templates\Page\index.ts</div>
<div class="t" id="tx30" style="left:329.70px;top:188.01px;font-size:10.03px;line-height:10.03px;font-weight:400;color:#1f2440;transform:scaleX(0.9263);">templates\Page\Page.css</div>
<div class="t" id="tx31" style="left:329.70px;top:212.60px;font-size:10.03px;line-height:10.03px;font-weight:400;color:#1f2440;transform:scaleX(0.9393);">templates\Page\Page.tsx</div>
<div class="t" id="tx32" style="left:329.70px;top:237.31px;font-size:10.03px;line-height:10.03px;font-weight:400;color:#1f2440;transform:scaleX(0.9362);">templates\Page\__tests__\Page.empty.te...</div>
<div class="t" id="tx33" style="left:329.70px;top:262.01px;font-size:10.03px;line-height:10.03px;font-weight:400;color:#1f2440;transform:scaleX(0.9360);">templates\Page\__tests__\Page.test.tsx</div>
<div class="t" id="tx34" style="left:995.57px;top:118.20px;font-size:10.9px;line-height:10.9px;font-weight:700;color:#111111;transform:scaleX(0.8947);">Download</div>
<div class="t" id="tx35" style="left:1070.87px;top:118.20px;font-size:10.9px;line-height:10.9px;font-weight:700;color:#ffffff;transform:scaleX(0.8681);">Apply to codebase</div>
<div id="lb" class="a"></div>
<div class="a" style="left:0;top:0;width:1px;height:8px;background:#1b4a62"></div>
</body></html>
